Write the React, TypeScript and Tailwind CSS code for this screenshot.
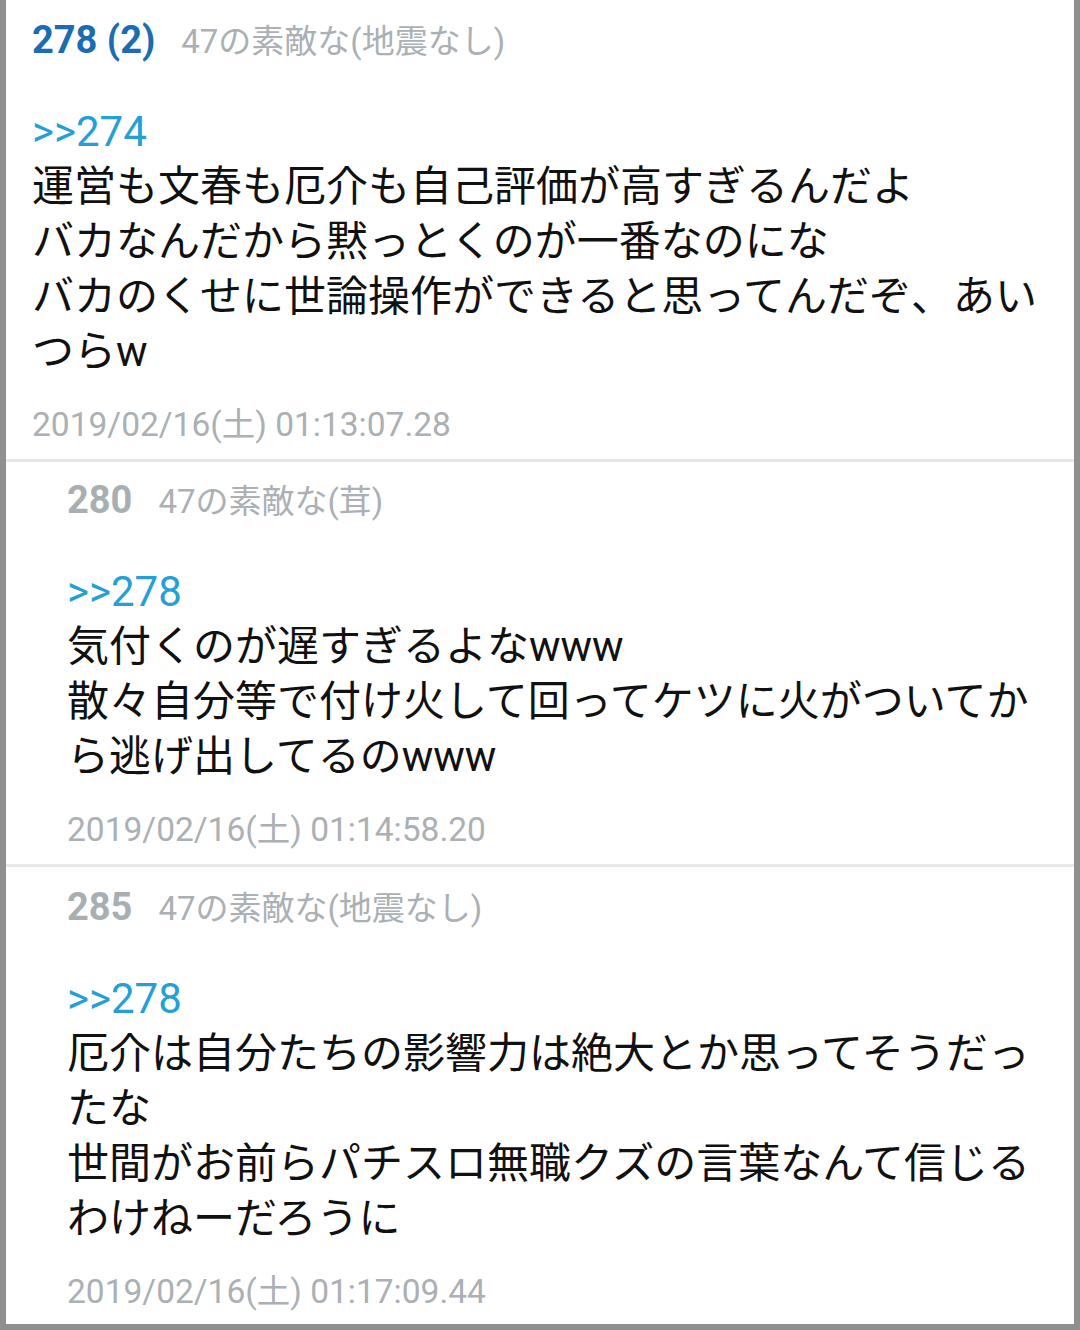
import React from "react";

type Post = {
  num: string;
  blue?: boolean;
  name: string;
  anchor: string;
  lines: string[];
  date: string;
  indent: boolean;
  pt: string;
};

const posts: Post[] = [
  {
    num: "278 (2)",
    blue: true,
    name: "47の素敵な(地震なし)",
    anchor: ">>274",
    lines: [
      "運営も文春も厄介も自己評価が高すぎるんだよ",
      "バカなんだから黙っとくのが一番なのにな",
      "バカのくせに世論操作ができると思ってんだぞ、あい",
      "つらw",
    ],
    date: "2019/02/16(土) 01:13:07.28",
    indent: false,
    pt: "pt-[18px]",
  },
  {
    num: "280",
    name: "47の素敵な(茸)",
    anchor: ">>278",
    lines: [
      "気付くのが遅すぎるよなwww",
      "散々自分等で付け火して回ってケツに火がついてか",
      "ら逃げ出してるのwww",
    ],
    date: "2019/02/16(土) 01:14:58.20",
    indent: true,
    pt: "pt-[16px]",
  },
  {
    num: "285",
    name: "47の素敵な(地震なし)",
    anchor: ">>278",
    lines: [
      "厄介は自分たちの影響力は絶大とか思ってそうだっ",
      "たな",
      "世間がお前らパチスロ無職クズの言葉なんて信じる",
      "わけねーだろうに",
    ],
    date: "2019/02/16(土) 01:17:09.44",
    indent: true,
    pt: "pt-[18px]",
  },
];

function PostView({ p, last }: { p: Post; last: boolean }) {
  return (
    <div
      className={
        (p.indent ? "pl-[61px] " : "pl-[26px] ") +
        "pr-[20px] " +
        p.pt +
        (last ? " flex-1" : " pb-[12px] border-b-[3px] border-[#e6e7e8]")
      }
    >
      <div className="flex items-baseline h-[44px] leading-[44px] whitespace-nowrap">
        <span
          className={
            "text-[38px] font-bold " +
            (p.blue ? "text-[#1b6cb0]" : "text-[#a8afb3]")
          }
        >
          {p.num}
        </span>
        <span className="ml-[26px] text-[33px] text-[#aab0b4]">{p.name}</span>
      </div>
      <div className="mt-[42px] text-[42px] leading-[55px] text-[#111111] whitespace-nowrap">
        <div className="text-[#259fd6]">{p.anchor}</div>
        {p.lines.map((l, i) => (
          <div key={i}>{l}</div>
        ))}
      </div>
      <div className="mt-[24px] h-[44px] leading-[44px] text-[33.5px] text-[#aab0b4] whitespace-nowrap">
        {p.date}
      </div>
    </div>
  );
}

export default function App() {
  return (
    <div
      className="w-[1080px] h-[1330px] bg-[#8f8f8f] flex flex-col overflow-hidden"
      style={{ fontFamily: 'Roboto, "Noto Sans CJK JP", sans-serif' }}
    >
      <div className="flex-1 ml-[6px] mr-[6px] mb-[6px] bg-white flex flex-col">
        {posts.map((p, i) => (
          <PostView key={i} p={p} last={i === posts.length - 1} />
        ))}
      </div>
    </div>
  );
}
